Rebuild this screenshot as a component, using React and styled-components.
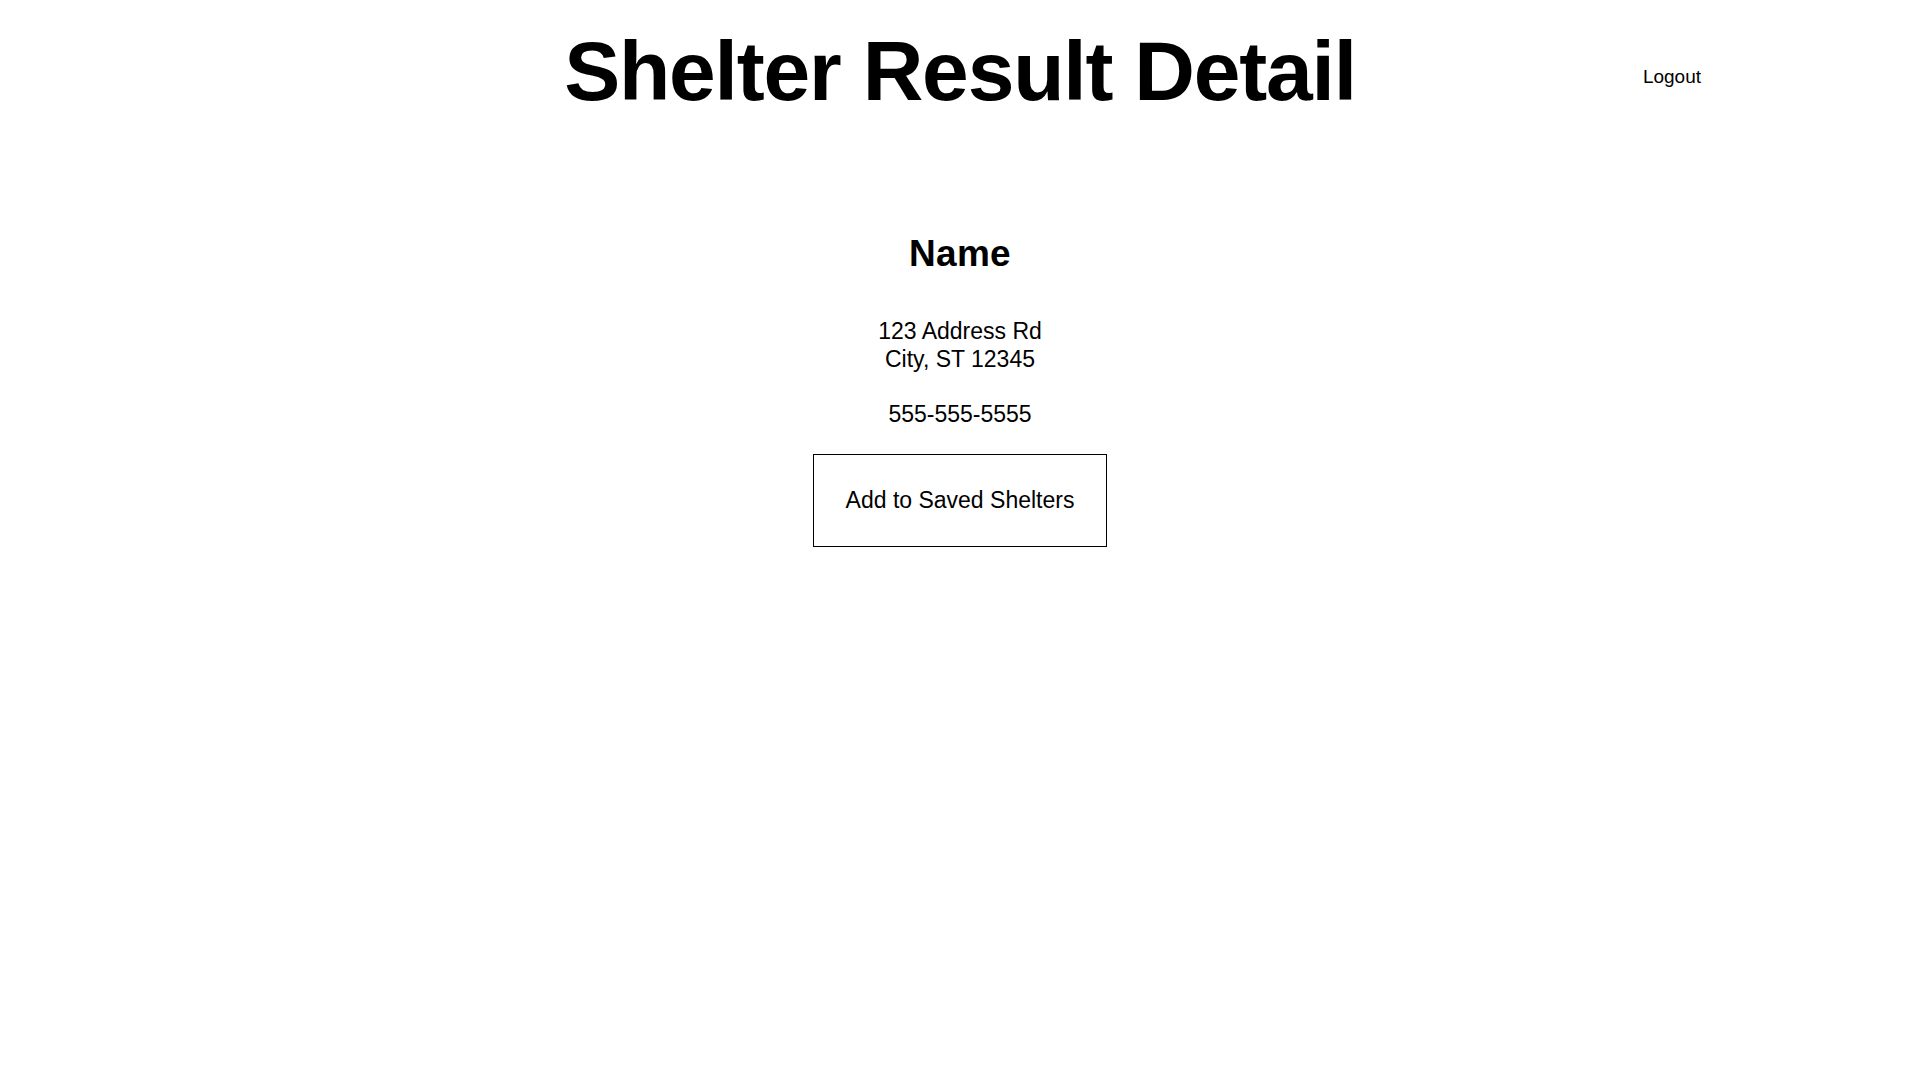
import styled, { createGlobalStyle } from "styled-components";

const GlobalStyle = createGlobalStyle`
	html, body {
		margin: 0;
		padding: 0;
		background: #fff;
		color: #000;
		font-family: "Liberation Sans", Arial, sans-serif;
	}
`;

const Page = styled.div`
	min-height: 100vh;
	display: flex;
	flex-direction: column;
	align-items: stretch;
`;

const Header = styled.header`
	display: grid;
	grid-template-columns: 1fr auto 1fr;
	align-items: start;
	padding-top: 29px;
`;

const Title = styled.h1`
	grid-column: 2;
	margin: 0;
	font-size: 84px;
	line-height: 1;
	font-weight: 700;
	letter-spacing: -1.2px;
	white-space: nowrap;
`;

const LogoutCell = styled.div`
	grid-column: 3;
	display: flex;
	justify-content: flex-end;
	padding-right: 219px;
`;

const LogoutLink = styled.a`
	margin-top: 38px;
	font-size: 19px;
	line-height: 1;
	color: #000;
	text-decoration: none;
	cursor: pointer;
`;

const Detail = styled.main`
	display: flex;
	flex-direction: column;
	align-items: center;
	padding-top: 122px;
	text-align: center;
`;

const Name = styled.h2`
	margin: 0;
	font-size: 37px;
	line-height: 1;
	font-weight: 700;
	letter-spacing: 0.3px;
`;

const InfoBlock = styled.div`
	margin-top: ${(props) => props.gap}px;
	font-size: 23px;
	line-height: 28px;
`;

const SaveButton = styled.button`
	margin-top: 26px;
	width: 294px;
	height: 93px;
	border: 1px solid #000;
	background: #fff;
	color: #000;
	font-family: "Liberation Sans", Arial, sans-serif;
	font-size: 23px;
	cursor: pointer;
`;

const shelter = {
	name: "Name",
	street: "123 Address Rd",
	city: "City, ST 12345",
	phone: "555-555-5555",
};

export default function App() {
	return (
		<Page>
			<GlobalStyle />
			<Header>
				<Title>Shelter Result Detail</Title>
				<LogoutCell>
					<LogoutLink>Logout</LogoutLink>
				</LogoutCell>
			</Header>
			<Detail>
				<Name>{shelter.name}</Name>
				<InfoBlock gap={45}>
					<div>{shelter.street}</div>
					<div>{shelter.city}</div>
				</InfoBlock>
				<InfoBlock gap={27}>{shelter.phone}</InfoBlock>
				<SaveButton>Add to Saved Shelters</SaveButton>
			</Detail>
		</Page>
	);
}
